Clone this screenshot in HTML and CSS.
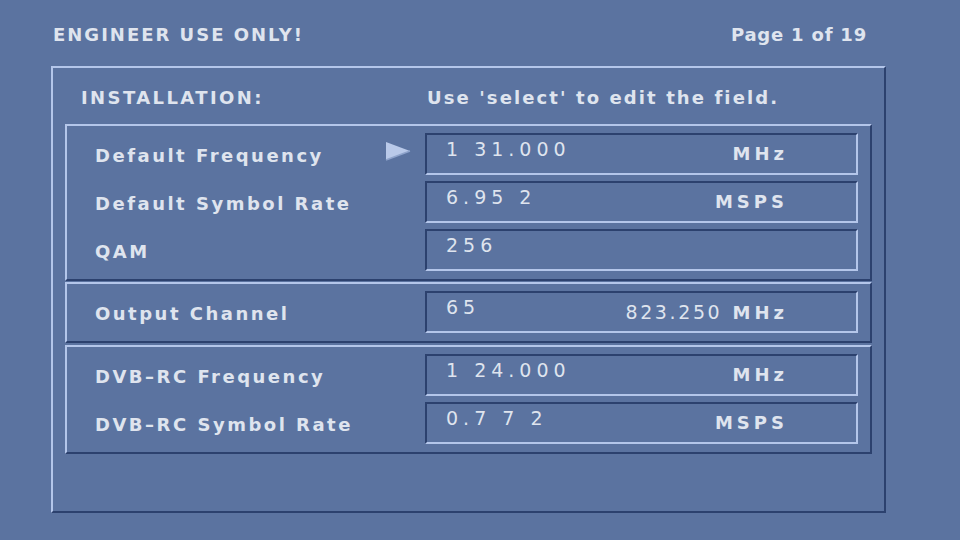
FILE: index.html
```html
<!DOCTYPE html>
<html>
<head>
<meta charset="utf-8">
<link rel="stylesheet" href="styles.css">
</head>
<body>
<div class="screen">
  <div class="header">
    <span class="hd-title">ENGINEER USE ONLY!</span>
    <span class="hd-page">Page 1 of 19</span>
  </div>
  <div class="panel">
    <div class="panel-title">
      <span class="pt-left">INSTALLATION:</span>
      <span class="pt-right">Use 'select' to edit the field.</span>
    </div>
    <div class="group">
      <div class="row">
        <span class="label">Default Frequency</span>
        <span class="pointer"><svg width="26" height="20" viewBox="0 0 26 20"><polygon points="1,1 25,10 1,19" fill="#b9c9e9"/><polyline points="1,19 25,10" stroke="#8ea3cb" stroke-width="1.5" fill="none"/></svg></span>
        <div class="field"><span class="val">1 31.000</span><span class="unit">MHz</span></div>
      </div>
      <div class="row">
        <span class="label">Default Symbol Rate</span>
        <span class="pointer"></span>
        <div class="field"><span class="val">6.95 2</span><span class="unit">MSPS</span></div>
      </div>
      <div class="row">
        <span class="label">QAM</span>
        <span class="pointer"></span>
        <div class="field"><span class="val">256</span></div>
      </div>
    </div>
    <div class="group g2">
      <div class="row">
        <span class="label">Output Channel</span>
        <span class="pointer"></span>
        <div class="field"><span class="val">65</span><span class="unit"><span class="num">823.250</span> MHz</span></div>
      </div>
    </div>
    <div class="group g3">
      <div class="row">
        <span class="label">DVB&#8211;RC Frequency</span>
        <span class="pointer"></span>
        <div class="field"><span class="val">1 24.000</span><span class="unit">MHz</span></div>
      </div>
      <div class="row">
        <span class="label">DVB&#8211;RC Symbol Rate</span>
        <span class="pointer"></span>
        <div class="field"><span class="val">0.7 7 2</span><span class="unit">MSPS</span></div>
      </div>
    </div>
  </div>
</div>
</body>
</html>
```
FILE: styles.css
```css
* { box-sizing: border-box; }
html, body { margin: 0; padding: 0; }
body {
  background: #5b73a0;
  width: 960px;
  height: 540px;
  overflow: hidden;
  font-family: "DejaVu Sans", sans-serif;
  color: #dfe4ee;
}
.screen {
  width: 960px;
  height: 540px;
  padding: 24px 0 0 51px;
}
.header {
  display: flex;
  justify-content: space-between;
  width: 816px;
  padding-left: 2px;
  height: 42px;
  font-weight: bold;
  font-size: 18px;
  letter-spacing: 2px;
}
.hd-page { letter-spacing: 0.8px; }
.panel {
  width: 835px;
  height: 447px;
  border-top: 2px solid #b4c6ea;
  border-left: 2px solid #b4c6ea;
  border-right: 2px solid #2c416e;
  border-bottom: 2px solid #2c416e;
  padding: 0 12px;
}
.panel-title {
  display: flex;
  height: 56px;
  padding: 19px 0 0 16px;
  font-weight: bold;
  font-size: 18px;
  letter-spacing: 2.4px;
}
.pt-left { width: 346px; }
.pt-right { letter-spacing: 2.1px; }
.group {
  border-top: 2px solid #b4c6ea;
  border-left: 2px solid #b4c6ea;
  border-right: 2px solid #2c416e;
  border-bottom: 2px solid #2c416e;
  padding: 7px 12px 8px 28px;
  display: flex;
  flex-direction: column;
  gap: 6px;
}
.g2 { margin-top: 1px; }
.g3 { margin-top: 2px; }
.row {
  display: flex;
  align-items: center;
  height: 42px;
}
.label {
  flex: 1;
  font-weight: bold;
  font-size: 18px;
  letter-spacing: 2.5px;
  padding-top: 2px;
}
.pointer {
  width: 40px;
  height: 20px;
  display: flex;
  align-items: center;
  margin-top: -6px;
}
.pointer svg { display: block; }
.field {
  width: 433px;
  height: 42px;
  border-top: 2px solid #2c416e;
  border-left: 2px solid #2c416e;
  border-right: 2px solid #b4c6ea;
  border-bottom: 2px solid #b4c6ea;
  display: flex;
  justify-content: space-between;
  padding: 0 68px 0 19px;
}
.val {
  font-size: 19px;
  letter-spacing: 5px;
  padding-top: 3px;
}
.unit {
  font-size: 18px;
  font-weight: bold;
  letter-spacing: 4px;
  padding-top: 8px;
}
.num {
  font-weight: normal;
  font-size: 19px;
  letter-spacing: 2.6px;
}
```
